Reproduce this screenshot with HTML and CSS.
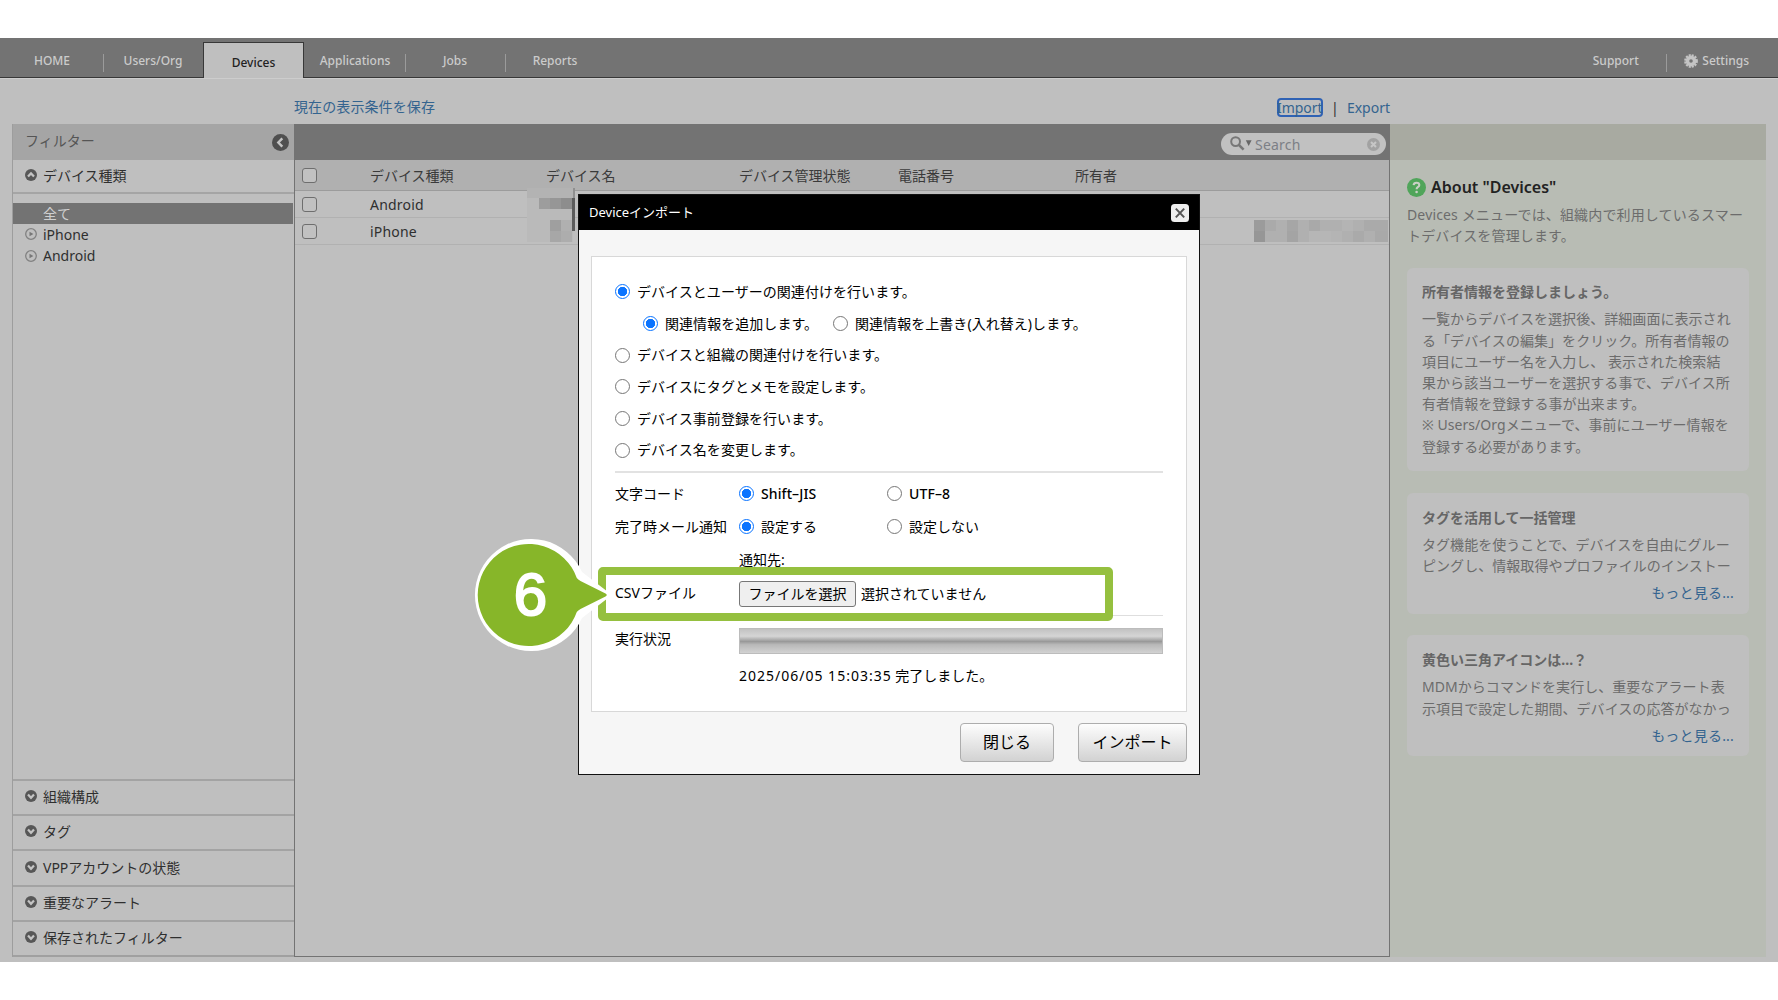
FILE: index.html
```html
<!DOCTYPE html>
<html lang="ja">
<head>
    <meta charset="UTF-8">
    <meta name="viewport" content="width=device-width, initial-scale=1.0">
    <title>Devices</title>
    <link rel="stylesheet" href="styles.css">
</head>
<body>
    <!-- shared icons -->
    <svg width="0" height="0" class="defs">
        <symbol id="down" viewBox="0 0 12 12">
            <circle cx="6" cy="6" r="6" fill="#575757"/>
            <path d="M3 4.6L6 7.8L9 4.6" fill="none" stroke="#c4c4c4" stroke-width="2.2"/>
        </symbol>
        <symbol id="up" viewBox="0 0 12 12">
            <circle cx="6" cy="6" r="6" fill="#575757"/>
            <path d="M3 7.6L6 4.4L9 7.6" fill="none" stroke="#c4c4c4" stroke-width="2.2"/>
        </symbol>
        <symbol id="play" viewBox="0 0 12 12">
            <circle cx="6" cy="6" r="5.3" fill="none" stroke="#828282" stroke-width="1.3"/>
            <path d="M4.5 3.8L8.4 6L4.5 8.2Z" fill="#777"/>
        </symbol>
    </svg>

    <div class="page">
        <nav class="navbar">
            <a class="nav-item home">HOME</a>
            <a class="nav-item users">Users/Org</a>
            <a class="nav-item active">Devices</a>
            <a class="nav-item apps">Applications</a>
            <a class="nav-item jobs">Jobs</a>
            <a class="nav-item reports">Reports</a>
            <div class="nav-right">
                <a class="nav-item support">Support</a>
                <a class="nav-item settings">
                    <svg width="14" height="14" viewBox="0 0 14 14">
                        <circle cx="7" cy="7" r="5.4" fill="#c4c4c4"/>
                        <circle cx="7" cy="7" r="5.8" fill="none" stroke="#c4c4c4" stroke-width="2.2" stroke-dasharray="2 1.04"/>
                        <circle cx="7" cy="7" r="1.8" fill="#737373"/>
                    </svg>
                    <span>Settings</span>
                </a>
            </div>
        </nav>

        <div class="toolbar">
            <a class="link save">現在の表示条件を保存</a>
            <div class="io-links">
                <a class="link import">Import</a>
                <span class="bar">|</span>
                <a class="link export">Export</a>
            </div>
        </div>

        <div class="content">
            <aside class="filter">
                <div class="filter-head">
                    <span>フィルター</span>
                    <svg width="17" height="17" viewBox="0 0 17 17">
                        <circle cx="8.5" cy="8.5" r="8.5" fill="#4f4f4f"/>
                        <path d="M10.3 4.3L6.3 8.5L10.3 12.7" fill="none" stroke="#c4c4c4" stroke-width="2.4"/>
                    </svg>
                </div>
                <div class="filter-title"><svg class="dot"><use href="#up"/></svg>デバイス種類</div>
                <ul class="filter-list">
                    <li class="selected">全て</li>
                    <li><svg class="dot"><use href="#play"/></svg>iPhone</li>
                    <li><svg class="dot"><use href="#play"/></svg>Android</li>
                </ul>
                <div class="accordion"><svg class="dot"><use href="#down"/></svg>組織構成</div>
                <div class="accordion"><svg class="dot"><use href="#down"/></svg>タグ</div>
                <div class="accordion"><svg class="dot"><use href="#down"/></svg>VPPアカウントの状態</div>
                <div class="accordion"><svg class="dot"><use href="#down"/></svg>重要なアラート</div>
                <div class="accordion"><svg class="dot"><use href="#down"/></svg>保存されたフィルター</div>
            </aside>

            <main class="list">
                <div class="list-bar">
                    <div class="search">
                        <svg width="22" height="16" viewBox="0 0 22 16">
                            <circle cx="5.6" cy="5.6" r="4.4" fill="none" stroke="#777" stroke-width="2"/>
                            <path d="M8.8 8.8L13.6 13.6" stroke="#777" stroke-width="2.6"/>
                            <path d="M15.8 4.2H21.6L18.7 10Z" fill="#666"/>
                        </svg>
                        <span>Search</span>
                        <svg class="clear" width="13" height="13" viewBox="0 0 13 13">
                            <circle cx="6.5" cy="6.5" r="6.5" fill="#a2a2a2"/>
                            <path d="M4 4L9 9M9 4L4 9" stroke="#c6c6c6" stroke-width="2"/>
                        </svg>
                    </div>
                </div>
                <div class="row head">
                    <i class="check"></i>
                    <span>デバイス種類</span>
                    <span>デバイス名</span>
                    <span>デバイス管理状態</span>
                    <span>電話番号</span>
                    <span>所有者</span>
                </div>
                <div class="row"><i class="check"></i><span>Android</span></div>
                <div class="row"><i class="check"></i><span>iPhone</span></div>
                <!-- masked values -->
                <svg class="mask mask-name" width="48" height="66" viewBox="0 0 48 66">
                    <path d="M0 0H46V10H0Z" fill="#b3b3b3"/>
                    <path d="M0 10H46V54H0Z" fill="#bababa"/>
                    <path d="M46 0H48V10H46Z" fill="#8f8f8f"/>
                    <path d="M12 10H23V21H12Z" fill="#9d9d9d"/>
                    <path d="M23 10H34V21H23Z" fill="#969696"/>
                    <path d="M34 10H45V21H34Z" fill="#8d8d8d"/>
                    <path d="M23 32H34V43H23Z" fill="#9f9f9f"/>
                    <path d="M34 32H45V43H34Z" fill="#b0b0b0"/>
                    <path d="M23 43H34V54H23Z" fill="#a7a7a7"/>
                    <path d="M34 43H45V54H34Z" fill="#adadad"/>
                    <path d="M45 10H48V43H45Z" fill="#5b5b5b"/>
                </svg>
                <svg class="mask mask-owner" width="134" height="22" viewBox="0 0 134 22">
                    <path d="M0 0H134V22H0Z" fill="#b0b0b0"/>
                    <path d="M0 0H11V11H0Z" fill="#9b9b9b"/>
                    <path d="M11 0H22V11H11Z" fill="#aaa"/>
                    <path d="M33 0H44V11H33Z" fill="#a6a6a6"/>
                    <path d="M55 0H66V11H55Z" fill="#a9a9a9"/>
                    <path d="M88 0H99V11H88Z" fill="#b4b4b4"/>
                    <path d="M110 0H134V11H110Z" fill="#aaa"/>
                    <path d="M0 11H11V22H0Z" fill="#969696"/>
                    <path d="M33 11H44V22H33Z" fill="#a4a4a4"/>
                    <path d="M55 11H77V22H55Z" fill="#b6b6b6"/>
                    <path d="M77 11H88V22H77Z" fill="#b4b4b4"/>
                    <path d="M99 11H110V22H99Z" fill="#aaa"/>
                    <path d="M121 11H134V22H121Z" fill="#a9a9a9"/>
                </svg>
            </main>

            <aside class="help">
                <div class="help-bar"></div>
                <div class="help-body">
                    <h2>
                        <svg width="19" height="19" viewBox="0 0 19 19">
                            <circle cx="9.5" cy="9.5" r="9.5" fill="#50a55a"/>
                            <path d="M6.6 7.2Q6.8 4.7 9.5 4.7Q12.3 4.7 12.3 7Q12.3 8.3 10.8 9.2Q9.6 10 9.6 11.3" fill="none" stroke="#c9d0c6" stroke-width="2.1"/>
                            <circle cx="9.6" cy="14" r="1.3" fill="#c9d0c6"/>
                        </svg>
                        About "Devices"
                    </h2>
                    <p class="lead">Devices メニューでは、組織内で利用しているスマー<br>トデバイスを管理します。</p>
                    <div class="card">
                        <h3>所有者情報を登録しましょう。</h3>
                        <p>一覧からデバイスを選択後、詳細画面に表示され<br>る「デバイスの編集」をクリック。所有者情報の<br>項目にユーザー名を入力し、 表示された検索結<br>果から該当ユーザーを選択する事で、デバイス所<br>有者情報を登録する事が出来ます。<br>※ Users/Orgメニューで、事前にユーザー情報を<br>登録する必要があります。</p>
                    </div>
                    <div class="card short">
                        <h3>タグを活用して一括管理</h3>
                        <p>タグ機能を使うことで、デバイスを自由にグルー<br>ピングし、情報取得やプロファイルのインストー</p>
                        <a class="link more">もっと見る...</a>
                    </div>
                    <div class="card short">
                        <h3>黄色い三角アイコンは...？</h3>
                        <p>MDMからコマンドを実行し、重要なアラート表<br>示項目で設定した期間、デバイスの応答がなかっ</p>
                        <a class="link more">もっと見る...</a>
                    </div>
                </div>
            </aside>
        </div>
    </div>

    <div class="dialog">
        <div class="dialog-head">
            <span>Deviceインポート</span>
            <svg width="18" height="18" viewBox="0 0 18 18">
                <rect width="18" height="18" rx="3.5" fill="#eee"/>
                <path d="M4.8 4.6L13.2 13.4M13.2 4.6L4.8 13.4" stroke="#555" stroke-width="2"/>
            </svg>
        </div>
        <div class="dialog-body">
            <div class="panel">
                <div class="choices">
                    <div class="choice"><i class="radio on"></i><span>デバイスとユーザーの関連付けを行います。</span></div>
                    <div class="choice sub">
                        <i class="radio on"></i><span class="first">関連情報を追加します。</span>
                        <i class="radio"></i><span>関連情報を上書き(入れ替え)します。</span>
                    </div>
                    <div class="choice"><i class="radio"></i><span>デバイスと組織の関連付けを行います。</span></div>
                    <div class="choice"><i class="radio"></i><span>デバイスにタグとメモを設定します。</span></div>
                    <div class="choice"><i class="radio"></i><span>デバイス事前登録を行います。</span></div>
                    <div class="choice"><i class="radio"></i><span>デバイス名を変更します。</span></div>
                </div>
                <div class="settings-grid">
                    <div class="field">
                        <label>文字コード</label>
                        <div class="opt"><i class="radio on"></i><b>Shift–JIS</b></div>
                        <div class="opt"><i class="radio"></i><b>UTF–8</b></div>
                    </div>
                    <div class="field">
                        <label>完了時メール通知</label>
                        <div class="opt"><i class="radio on"></i><span>設定する</span></div>
                        <div class="opt"><i class="radio"></i><span>設定しない</span></div>
                    </div>
                    <div class="field"><label></label><span>通知先:</span></div>
                    <div class="field csv">
                        <label>CSVファイル</label>
                        <button class="file-btn">ファイルを選択</button>
                        <span class="file-name">選択されていません</span>
                    </div>
                </div>
                <div class="status">
                    <label>実行状況</label>
                    <div class="status-main">
                        <div class="progress"></div>
                        <p><span class="date">2025/06/05 15:03:35</span> 完了しました。</p>
                    </div>
                </div>
            </div>
            <div class="buttons">
                <button class="btn close">閉じる</button>
                <button class="btn submit">インポート</button>
            </div>
        </div>
    </div>

    <!-- step marker -->
    <div class="highlight"></div>
    <div class="marker">
        <svg width="136" height="114" viewBox="0 0 136 114">
            <path d="M108 34A56 56 0 1 0 108 80L134 60Q137 57 134 54Z" fill="#fff"/>
            <path d="M102.8 40A51 51 0 1 0 102.8 74Q104 72.5 106.5 71L131.5 58.5Q134 57 131.5 55.5L106.5 43Q104 41.5 102.8 40Z" fill="#87b629"/>
        </svg>
        <span>6</span>
    </div>
</body>
</html>
```
FILE: styles.css
```css
* {
    box-sizing: border-box;
}

body {
    margin: 0;
    padding-top: 38px;
    height: 1000px;
    overflow: hidden;
    background: #fff;
    font-family: "Noto Sans", "Noto Sans CJK JP", sans-serif;
    font-size: 14px;
    color: #2f2f2f;
    white-space: nowrap;
}

h2, h3, p, ul {
    margin: 0;
    padding: 0;
}

.defs {
    position: absolute;
}

.page {
    height: 924px;
    background: #bfbfbf;
}

.link {
    color: #34648f;
}

/* Navigation */
.navbar {
    display: flex;
    height: 40px;
    background: #737373;
    border-bottom: 1px solid #383838;
    box-shadow: 0 1px 0 #cdcdcd;
    font-size: 12px;
    font-weight: 500;
    color: #cbcbcb;
}

.nav-item {
    position: relative;
    display: flex;
    align-items: center;
    justify-content: center;
    padding-top: 6px;
}

.home { width: 104px; }
.users { width: 99px; padding-right: 1px; }
.apps { width: 102px; }
.jobs { width: 100px; padding-right: 2px; }
.reports { width: 98px; }
.support { width: 103px; }

.home::after,
.apps::after,
.jobs::after,
.support::after {
    content: "";
    position: absolute;
    right: 0;
    top: 16px;
    width: 1px;
    height: 18px;
    background: #9b9b9b;
}

.active {
    width: 101px;
    height: 36px;
    margin-top: 4px;
    padding-top: 3px;
    background: #bfbfbf;
    border: 1px solid #383838;
    border-bottom: 0;
    color: #222;
}

.nav-right {
    display: flex;
    margin-left: auto;
}

.settings {
    gap: 4px;
    padding-left: 17px;
    padding-right: 29px;
}

/* Links above the list */
.toolbar {
    display: flex;
    justify-content: space-between;
    align-items: center;
    height: 46px;
    padding: 12px 388px 0 294px;
}

.save {
    padding-bottom: 2px;
    letter-spacing: 0.1px;
}

.io-links {
    display: flex;
    align-items: center;
}

.import {
    width: 46px;
    height: 19px;
    line-height: 15px;
    text-align: center;
    border: 2px solid #2f62b4;
    border-radius: 4px;
    text-indent: -2px;
}

.bar {
    width: 24px;
    text-align: center;
}

.content {
    display: flex;
    height: 833px;
    padding-left: 12px;
}

/* Filter */
.filter {
    display: flex;
    flex-direction: column;
    width: 282px;
    border-left: 1px solid #9d9d9d;
}

.filter-head {
    display: flex;
    align-items: center;
    justify-content: space-between;
    height: 36px;
    padding: 0 5px 4px 12px;
    background: #a5a5a5;
    color: #555;
}

.filter-head svg {
    margin-top: 4px;
}

.filter-title {
    display: flex;
    align-items: center;
    height: 34px;
    padding: 0 0 2px 12px;
    border-bottom: 2px solid #a5a5a5;
}

.dot {
    width: 12px;
    height: 12px;
    margin-right: 6px;
}

.filter-list {
    flex: 1;
    padding-top: 9px;
    list-style: none;
}

.filter-list li {
    display: flex;
    align-items: center;
    height: 21.3px;
    padding: 0 0 1px 12px;
}

.filter-list .selected {
    margin-right: 1px;
    padding: 0 0 2px 30px;
    background: #737373;
    color: #cfcfcf;
}

.accordion {
    display: flex;
    align-items: center;
    height: 35.3px;
    padding: 0 0 3px 12px;
    border-top: 2px solid #a3a3a3;
}

.accordion:last-child {
    height: 37px;
    border-bottom: 2px solid #a0a0a0;
}

/* Device list */
.list {
    position: relative;
    width: 1096px;
    border: solid #737373;
    border-width: 0 1px 1px;
}

.list-bar {
    display: flex;
    align-items: center;
    justify-content: flex-end;
    height: 36px;
    padding: 4px 3px 0 0;
    background: #737373;
}

.search {
    display: flex;
    align-items: center;
    width: 165px;
    height: 22px;
    padding: 0 6px 0 9px;
    border-radius: 11px;
    background: #c1c1c1;
    color: #7c7f86;
}

.search span {
    margin-left: 3px;
    letter-spacing: 0.2px;
}

.clear {
    margin-left: auto;
}

.row {
    display: grid;
    grid-template-columns: 68px 176px 193px 159px 177px 1fr;
    align-items: center;
    height: 27px;
    padding-left: 7px;
    border-bottom: 1px solid #b1b1b1;
}

.row:not(.head) span {
    letter-spacing: 0.2px;
}

.row.head {
    height: 31px;
    background: #b0b0b0;
    border-bottom-color: #9c9c9c;
    color: #3a3a3a;
}

.check {
    width: 15px;
    height: 15px;
    border: 1px solid #6e6e6e;
    border-radius: 3px;
    background: #c1c1c1;
}

.mask {
    position: absolute;
}

.mask-name {
    left: 232px;
    top: 64px;
}

.mask-owner {
    right: 1px;
    top: 96px;
}

/* Help */
.help {
    width: 376px;
    background: #b8bcb4;
    color: #6c6c6c;
}

.help-bar {
    height: 36px;
    background: #a8aaa1;
}

.help-body {
    padding: 15px 17px;
}

.help h2 {
    display: flex;
    align-items: center;
    gap: 5px;
    height: 24px;
    font-size: 16px;
    font-weight: 600;
    color: #222;
}

.help p {
    line-height: 21.2px;
    letter-spacing: 0.05px;
}

.help .lead {
    margin: 5px 0 22px 0;
    letter-spacing: 0.15px;
}

.card {
    width: 342px;
    height: 203px;
    margin-bottom: 21.5px;
    padding: 12px 15px;
    border-radius: 6px;
    background: #bfbfbf;
}

.card.short {
    height: 121px;
    padding-top: 13px;
}

.card h3 {
    height: 28px;
    line-height: 24px;
    font-size: 14px;
    color: #666;
}

.more {
    display: block;
    margin-top: 5px;
    text-align: right;
    line-height: 24px;
    letter-spacing: 0.2px;
}

/* Import dialog */
.dialog {
    position: absolute;
    left: 578px;
    top: 194px;
    width: 622px;
    height: 581px;
    border: 1px solid #111;
    background: #f6f6f6;
    color: #000;
}

.dialog-head {
    display: flex;
    align-items: center;
    justify-content: space-between;
    height: 35px;
    padding: 0 10px 0 10px;
    background: #000;
    color: #fff;
    font-size: 13px;
}

.dialog-head span {
    padding-bottom: 2px;
}

.dialog-body {
    padding: 26px 12px 0 12px;
}

.panel {
    height: 456px;
    padding: 19px 23px;
    border: 1px solid #d8d8d8;
    background: #fff;
}

.radio {
    width: 15px;
    height: 15px;
    margin-right: 7px;
    border: 1px solid #767676;
    border-radius: 50%;
    background: #fff;
}

.radio.on {
    border: 1.5px solid #0b74ff;
    background: radial-gradient(circle, #0b74ff 4.4px, #fff 5px);
}

.choices {
    height: 197px;
    border-bottom: 2px solid #e2e2e2;
}

.choice {
    display: flex;
    align-items: center;
    height: 31.7px;
    letter-spacing: 0.05px;
}

.choice span,
.opt span {
    padding-bottom: 2px;
}

.sub {
    padding-left: 28px;
}

.first {
    width: 168px;
}

.settings-grid {
    height: 143px;
    padding-top: 4px;
    border-bottom: 1px solid #dedede;
}

.field {
    display: flex;
    align-items: center;
    height: 33px;
}

.field label,
.status label {
    width: 124px;
    flex: none;
    padding-bottom: 2px;
}

.field > span {
    padding-bottom: 2px;
}

.opt {
    display: flex;
    align-items: center;
    width: 148px;
}

.opt b {
    font-size: 14px;
    font-weight: 500;
    letter-spacing: 0.1px;
}

.file-btn {
    width: 117px;
    height: 26px;
    margin-top: 3px;
    padding: 0 0 1px;
    border: 1px solid #777;
    border-radius: 3px;
    background: #efefef;
    font: inherit;
    line-height: 20px;
}

.field .file-name {
    margin-left: 5px;
    padding-bottom: 0;
}

.status {
    display: flex;
    padding-top: 12px;
}

.status label {
    line-height: 21px;
}

.status-main {
    flex: 1;
}

.progress {
    height: 26px;
    border: 1px solid #bcbcbc;
    background: linear-gradient(#c2c2c2, #d5d5d5 30%, #999 52%, #b8b8b8 65%, #d2d2d2);
}

.status p {
    margin-top: 11px;
    line-height: 22px;
}

.date {
    letter-spacing: 1px;
}

.buttons {
    display: flex;
    justify-content: flex-end;
    gap: 24px;
    padding-top: 11px;
}

.btn {
    height: 39px;
    padding: 0 0 3px;
    border: 1px solid #adadad;
    border-radius: 4px;
    background: linear-gradient(#fdfdfd, #d2d2d2);
    font: inherit;
    font-size: 16px;
}

.close { width: 94px; }
.submit { width: 109px; }

/* Step marker */
.highlight {
    position: absolute;
    left: 598px;
    top: 567px;
    width: 515px;
    height: 54px;
    border: 8px solid #95c03f;
    border-radius: 5px;
}

.marker {
    position: absolute;
    left: 474px;
    top: 538px;
    width: 136px;
    height: 114px;
}

.marker span {
    position: absolute;
    left: 0;
    top: 0;
    width: 113px;
    line-height: 114px;
    text-align: center;
    font-family: "Liberation Sans", sans-serif;
    font-size: 60px;
    -webkit-text-stroke: 2px #fff;
    color: #fff;
}
```
